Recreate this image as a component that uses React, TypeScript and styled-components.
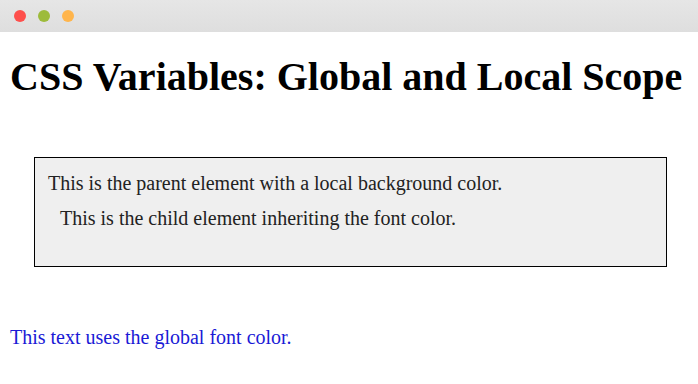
import React from 'react';
import styled, { createGlobalStyle } from 'styled-components';

const GlobalStyle = createGlobalStyle`
  html, body {
    margin: 0;
    padding: 0;
    background: #ffffff;
  }
  body {
    font-family: "Liberation Serif", "Times New Roman", serif;
    overflow: hidden;
  }
`;

const Window = styled.div`
  width: 698px;
  height: 384px;
  display: flex;
  flex-direction: column;
  background: #ffffff;
`;

const TitleBar = styled.div`
  height: 32px;
  flex: none;
  display: flex;
  align-items: center;
  gap: 12px;
  padding-left: 14px;
  background: linear-gradient(#e6e6e6, #dedede);
`;

const Dot = styled.span<{ $color: string }>`
  width: 12px;
  height: 12px;
  border-radius: 50%;
  background: ${(p) => p.$color};
`;

const Page = styled.div`
  padding: 0 10px;
  color: #0000cc;
  font-size: 20px;
`;

const Heading = styled.h1`
  margin: 22px 0 0;
  color: #000000;
  font-size: 40px;
  font-weight: 700;
  line-height: 46px;
  white-space: nowrap;
`;

const Parent = styled.div`
  margin: 57px 21px 0 24px;
  height: 110px;
  box-sizing: border-box;
  border: 1px solid #000000;
  background: #efefef;
  color: #222222;
  padding: 14px 13px;
`;

const Line = styled.p<{ $indent?: boolean }>`
  margin: 0 0 13px;
  padding-left: ${(p) => (p.$indent ? '12px' : '0')};
  line-height: 22px;
`;

const Footer = styled.p`
  margin: 59px 0 0;
  line-height: 22px;
  color: #1a1ad6;
`;

export default function App() {
  return (
    <>
      <GlobalStyle />
      <Window>
        <TitleBar>
          <Dot $color="#fe4f4c" />
          <Dot $color="#9dbb3b" />
          <Dot $color="#ffb54c" />
        </TitleBar>
        <Page>
          <Heading>CSS Variables: Global and Local Scope</Heading>
          <Parent>
            <Line>This is the parent element with a local background color.</Line>
            <Line $indent>This is the child element inheriting the font color.</Line>
          </Parent>
          <Footer>This text uses the global font color.</Footer>
        </Page>
      </Window>
    </>
  );
}
